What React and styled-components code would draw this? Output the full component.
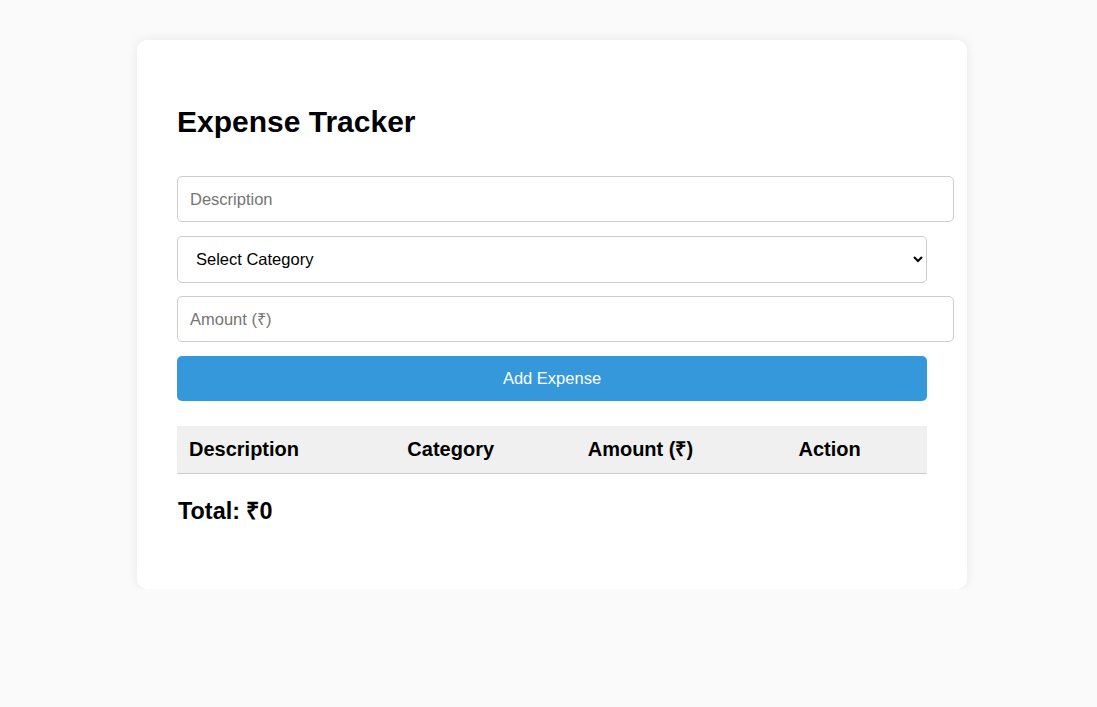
import React, { useState } from 'react';
import styled, { createGlobalStyle } from 'styled-components';

const GlobalStyle = createGlobalStyle`
  body {
    margin: 0;
    background-color: #fafafa;
    font-family: Arial, "Liberation Sans", sans-serif;
    font-size: 20px;
  }
`;

const Page = styled.div`
  padding: 40px 0 0 7px;
`;

const Card = styled.div`
  max-width: 750px;
  margin: 0 auto;
  padding: 40px;
  background-color: white;
  border-radius: 10px;
  box-shadow: 0 0 12px rgba(0, 0, 0, 0.08);
`;

const Title = styled.h2`
  font-size: 30px;
  margin: 25px 0 0;
`;

const Form = styled.div`
  display: flex;
  flex-direction: column;
  align-items: flex-start;
  gap: 13.5px;
  margin-top: 37px;
`;

const Input = styled.input`
  width: 100%;
  height: 20px;
  padding: 12px 13px 12px 12px;
  font-size: 16.5px;
  font-family: Arial, "Liberation Sans", sans-serif;
  border: 1px solid #ccc;
  border-radius: 5px;
  outline: none;
  &::placeholder {
    color: #757575;
  }
`;

const Select = styled.select`
  width: 100%;
  height: 47px;
  padding: 0 12px 0 14px;
  font-size: 16.5px;
  font-family: Arial, "Liberation Sans", sans-serif;
  border: 1px solid #ccc;
  border-radius: 5px;
  background-color: white;
  color: black;
`;

const Button = styled.button`
  width: 100%;
  height: 45px;
  padding: 0 12px;
  font-size: 16.5px;
  font-family: Arial, "Liberation Sans", sans-serif;
  color: white;
  background-color: #3498db;
  border: none;
  border-radius: 5px;
  cursor: pointer;
`;

const Table = styled.table`
  width: 100%;
  border-collapse: collapse;
  margin-top: 25.5px;
`;

const Th = styled.th`
  text-align: left;
  padding: 12px;
  font-size: 20px;
  line-height: 23px;
  background-color: #f0f0f0;
  border-bottom: 1px solid #ccc;
`;

const Total = styled.h3`
  font-size: 23.4px;
  line-height: 27px;
  margin: 23.5px 0 24.6px 1px;
`;

export default function App() {
  const [expenses] = useState([]);
  const total = expenses.reduce((sum, e) => sum + e.amount, 0);

  return (
    <>
      <GlobalStyle />
      <Page>
        <Card>
          <Title>Expense Tracker</Title>
          <Form>
            <Input type="text" placeholder="Description" />
            <Select defaultValue="">
              <option value="">Select Category</option>
              <option value="Food">Food</option>
              <option value="Travel">Travel</option>
              <option value="Shopping">Shopping</option>
              <option value="Bills">Bills</option>
            </Select>
            <Input type="number" placeholder="Amount (₹)" />
            <Button>Add Expense</Button>
          </Form>
          <Table>
            <thead>
              <tr>
                <Th>Description</Th>
                <Th>Category</Th>
                <Th>Amount (₹)</Th>
                <Th>Action</Th>
              </tr>
            </thead>
            <tbody>
              {expenses.map((e) => (
                <tr key={e.id}>
                  <td>{e.description}</td>
                  <td>{e.category}</td>
                  <td>{e.amount}</td>
                  <td />
                </tr>
              ))}
            </tbody>
          </Table>
          <Total>Total: ₹{total}</Total>
        </Card>
      </Page>
    </>
  );
}
